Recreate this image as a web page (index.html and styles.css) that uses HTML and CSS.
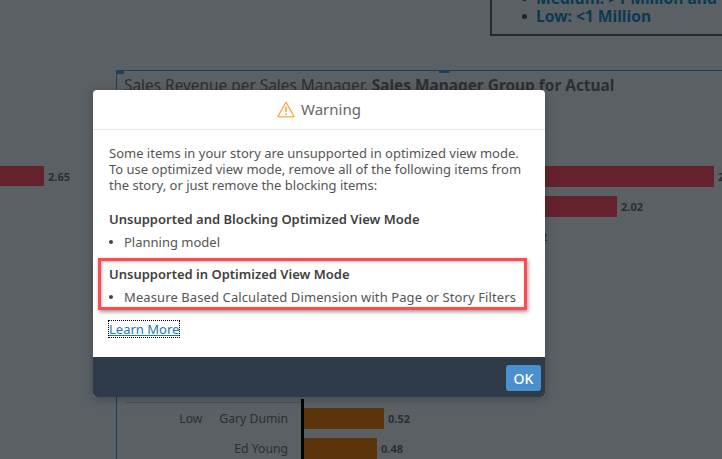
FILE: index.html
```html
<!DOCTYPE html>
<html lang="en">
<head>
<meta charset="utf-8">
<title>Warning</title>
<link rel="stylesheet" href="styles.css">
</head>
<body>
<div class="story">
  <div class="side-widget">
    <div class="bar red side-bar"></div>
    <span class="value">2.65</span>
  </div>

  <div class="note">
    <ul>
      <li>Medium: &gt;1 Million and</li>
      <li>Low: &lt;1 Million</li>
    </ul>
  </div>

  <section class="chart">
    <i class="handle handle-corner"></i>
    <i class="handle handle-mid"></i>
    <h2 class="chart-title">Sales Revenue per Sales Manager, <b>Sales Manager Group for Actual</b></h2>
    <div class="rows">
      <div class="row"><div class="labels"></div><div class="plot"><div class="bar red" style="width:410px"></div><span class="value">2.65</span></div></div>
      <div class="row"><div class="labels"></div><div class="plot"><div class="bar red" style="width:313px"></div><span class="value">2.02</span></div></div>
      <div class="row"><div class="labels"></div><div class="plot"><div class="bar red" style="width:217px"></div><span class="value">1.42</span></div></div>
    </div>
    <div class="rows rows-low">
      <div class="row"><div class="labels"><span class="group">Low</span><span class="name">Gary Dumin</span></div><div class="plot axis"><div class="bar orange" style="width:80px"></div><span class="value">0.52</span></div></div>
      <div class="row"><div class="labels"><span class="name">Ed Young</span></div><div class="plot axis"><div class="bar orange" style="width:73px"></div><span class="value">0.48</span></div></div>
    </div>
  </section>
</div>

<div class="dialog" role="dialog">
  <header class="dialog-head">
    <svg class="warn-icon" width="18" height="17" viewBox="0 0 18 17" aria-hidden="true">
      <path d="M9 1.2 L1.1 15.1 Q0.9 15.8 1.6 15.8 H16.4 Q17.1 15.8 16.9 15.1 Z" fill="none" stroke="#f7a83e" stroke-width="1.3" stroke-linejoin="round"/>
      <path d="M9 5.6 V11" stroke="#f7a83e" stroke-width="1.6"/>
      <rect x="8.2" y="12.2" width="1.6" height="1.7" fill="#f7a83e"/>
    </svg>
    <span class="dialog-title">Warning</span>
  </header>
  <div class="dialog-body">
    <p class="intro">Some items in your story are unsupported in optimized view mode.<br>To use optimized view mode, remove all of the following items from<br>the story, or just remove the blocking items:</p>
    <h3 class="group-title">Unsupported and Blocking Optimized View Mode</h3>
    <ul class="items"><li>Planning model</li></ul>
    <div class="highlighted">
      <h3 class="group-title">Unsupported in Optimized View Mode</h3>
      <ul class="items"><li>Measure Based Calculated Dimension with Page or Story Filters</li></ul>
    </div>
    <a class="learn" href="#">Learn More</a>
  </div>
  <footer class="dialog-foot">
    <button class="ok" type="button">OK</button>
  </footer>
</div>
</body>
</html>
```
FILE: styles.css
```css
* { box-sizing: border-box; }
html, body { margin: 0; height: 100%; }
body {
  width: 722px;
  height: 459px;
  overflow: hidden;
  position: relative;
  font-family: "Noto Sans", "Open Sans", sans-serif;
  background: #5b6065;
}
.story { position: absolute; inset: 0; overflow: hidden; }

/* widgets on the free story canvas */
.side-widget { position: absolute; left: 0; top: 166px; display: flex; align-items: center; height: 20px; }
.side-bar { width: 44px; }
.note {
  position: absolute;
  left: 490px;
  top: -20px;
  width: 300px;
  height: 56px;
  border: 2px solid #26292c;
  color: #0b3a50;
  font-size: 15.6px;
  font-weight: 700;
  line-height: 18px;
}
.note ul { margin: 7px 0 0; padding: 0 0 0 44px; list-style: none; white-space: nowrap; }
.note li { position: relative; }
.note li::before { content: ""; position: absolute; left: -14px; top: 7px; width: 5px; height: 5px; border-radius: 50%; background: #1f2326; }

.chart {
  position: absolute;
  left: 116px;
  top: 70px;
  width: 700px;
  height: 480px;
  border: 1px solid #1f3f58;
  border-width: 1px 0 0 1px;
}
.handle { position: absolute; background: #1f3f58; height: 3px; top: -1px; }
.handle-corner { left: -1px; width: 8px; height: 4px; }
.handle-mid { left: 322px; width: 11px; }
.chart-title {
  margin: 6px 0 0 7px;
  font-size: 15.4px;
  line-height: 18px;
  font-weight: 400;
  color: #2b2f33;
  white-space: nowrap;
}
.chart-title b { font-weight: 700; }

.rows { display: flex; flex-direction: column; gap: 9px; margin-top: 71px; }
.rows-low { margin-top: 161px; gap: 9px; position: relative; }
.rows-low::before { content: ""; position: absolute; left: 9px; width: 175px; top: -6px; height: 1px; background: #4c5054; }
.row { display: flex; height: 21px; }
.labels {
  width: 184px;
  padding-right: 13px;
  display: flex;
  justify-content: flex-end;
  align-items: center;
  gap: 17px;
  font-size: 12.2px;
  color: #2b2f33;
}
.plot { display: flex; align-items: center; padding-left: 3px; position: relative; }
.axis::before { content: ""; position: absolute; left: 0; top: -9px; bottom: -9px; width: 3px; background: #000; }
.bar { height: 100%; }
.side-bar.bar { height: 20px; }
.red { background: #65222d; }
.orange { background: #5c340c; }
.value { margin-left: 4px; font-size: 11px; font-weight: 700; color: #2b2f33; }

/* dialog over the story */
.dialog {
  position: absolute;
  left: 93px;
  top: 90px;
  width: 452px;
  height: 307px;
  display: flex;
  flex-direction: column;
  background: #fff;
  border-radius: 4px;
  box-shadow: 0 2px 10px rgba(0,0,0,.25);
  overflow: hidden;
}
.dialog-head {
  height: 40px;
  flex: none;
  display: flex;
  align-items: center;
  justify-content: center;
  gap: 6px;
  padding-bottom: 1px;
  border-bottom: 1px solid #e5e5e5;
}
.dialog-title { font-size: 15px; color: #666; }
.dialog-body {
  flex: 1;
  padding: 15px 16px 0;
  font-size: 13px;
  line-height: 16px;
  color: #555;
  position: relative;
}
.intro { margin: 0 0 18px; }
.group-title { margin: 0; font-size: 13px; line-height: 16px; font-weight: 600; color: #3f3f3f; }
.items { margin: 7px 0 0; padding: 0 0 0 15px; list-style: none; }
.items li { position: relative; }
.items li::before { content: ""; position: absolute; left: -15px; top: 6px; width: 4px; height: 4px; border-radius: 50%; background: #444; }
.highlighted {
  margin: 8px 0 0 -11px;
  width: 429px;
  height: 52px;
  padding: 5px 0 0 8px;
  border: 3px solid #ff4a4f;
  box-shadow: 1px 2px 4px rgba(0,0,0,.4), inset 1px 1px 3px rgba(0,0,0,.25);
}
.highlighted .items { margin-top: 7px; letter-spacing: .1px; }
.learn {
  display: inline-block;
  margin-top: 11px;
  color: #1b78b8;
  text-decoration: underline;
  outline: 1px dotted #000;
}
.dialog-foot {
  height: 40px;
  flex: none;
  background: #2f3b48;
  display: flex;
  justify-content: flex-end;
  align-items: flex-start;
  padding: 8px 4px 0 0;
}
.ok {
  width: 35px;
  height: 26px;
  padding: 0;
  border: 0;
  border-radius: 3px;
  background: #4a90cf;
  color: #fff;
  font: 500 14px "Noto Sans", sans-serif;
}
```
